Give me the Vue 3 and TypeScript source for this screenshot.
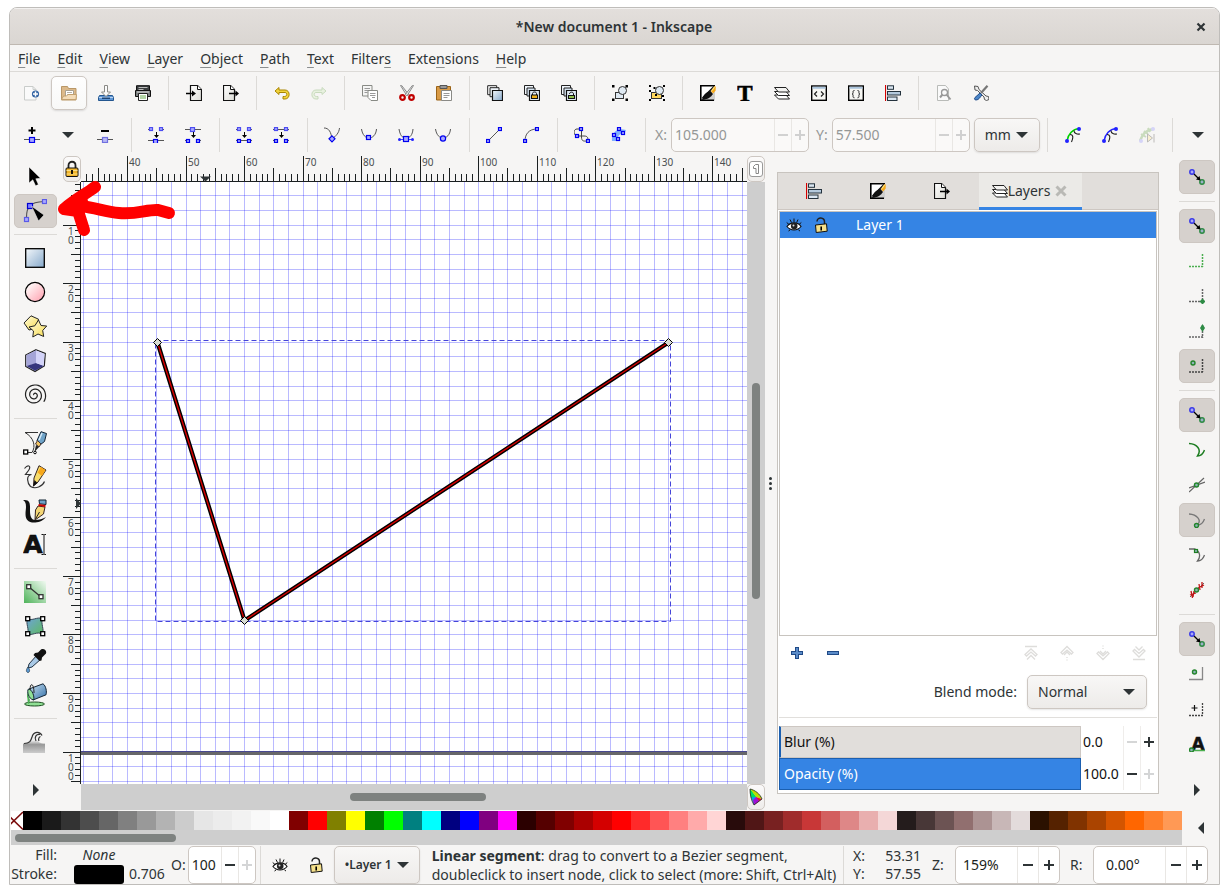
<script setup lang="ts">
import { computed, onBeforeUnmount, onMounted, ref } from 'vue'

type Item = { icon: string; label: string; active?: boolean; hot?: boolean; off?: boolean }

const node = (x: number, y: number, s = 3, stroke = '#0000f0', fill = '#a9a9ff') =>
  `<rect x="${x + 0.5}" y="${y + 0.5}" width="${s}" height="${s}" fill="${fill}" stroke="${stroke}" stroke-width="1.2"/>`
const seg = (d: string, c = '#555', w = 1) =>
  `<path d="${d}" fill="none" stroke="${c}" stroke-width="${w}"/>`
const downArrow = '<path d="M8.500 5v4" stroke="#000" fill="none"/><path d="M6 8h5l-2.500 3z" fill="#000"/>'
const plusBox = '<path d="M8 0v7M4.500 3.500h7" stroke="#000" stroke-width="2"/>'
const page = '<path d="M4.500.5h7l4 4v11h-11z" fill="url(#gPage)" stroke="#111" stroke-width="1.200"/><path d="M11.500.5v4h4" fill="#fff" stroke="#111"/>'
const snapPair =
  '<circle cx="3" cy="3" r="2.200" fill="#a9a9f5" stroke="#3a3ae8" stroke-width="1.500"/><circle cx="13" cy="13" r="2.200" fill="#9cb0c8" stroke="#2e8b45" stroke-width="1.500"/><path d="M5 5l4 4" stroke="#000" stroke-width="1.300"/><path d="M11.500 11.500l-4.500-1 3.500-3.500z" fill="#000"/>'
const greenDot = (x: number, y: number) =>
  `<circle cx="${x}" cy="${y}" r="2" fill="#8fb3b8" stroke="#23852b" stroke-width="1.400"/>`
const drawer = (body: string) =>
  `<path d="M.5.5h9v9h-9z" fill="#eef4fa" stroke="#222"/><path d="M3 3h8v8h-8z" fill="#d5e3f0" stroke="#222"/>${body}`
const fillStroke =
  '<path d="M.7.700h14.300L.7 14z" fill="#fff"/><path d="M15 6v9.500H6z" fill="#cfcfcf"/><path d="M0 .8h15M.8 0v15.500M0 15.200h14" fill="none" stroke="#000" stroke-width="1.600"/><path d="M2 15c1-5 4-8 8.500-9l2.500 3c-2 3-5 5.500-11 6z" fill="#111"/><path d="M2.500 13L14 1.500" stroke="#111" stroke-width="1.500"/><path d="M11 6l3.500-5 1.300.8-.2 4-2.500 2.700z" fill="#f5a81b"/><path d="M12 5.500l2.500-3.500" stroke="#ffe680" stroke-width="1.200"/>'
const align =
  '<path d="M.5 0v16" stroke="#d40000" stroke-width="1.200"/><rect x="2.500" y=".8" width="6" height="3.500" fill="#dbe7f2" stroke="#24323d"/><rect x="2.500" y="6.500" width="13" height="3.500" fill="#b5cadd" stroke="#24323d"/><rect x="2.500" y="12" width="9.500" height="3.500" fill="#dbe7f2" stroke="#24323d"/>'
const layers =
  '<path d="M.5 10l4 4h11l-3.500-4z" fill="#fff" stroke="#222"/><path d="M.5 6.500l4 4h11L12 6.500z" fill="#fff" stroke="#222"/><path d="M.5 2.500l4 4.500h11L12 2.500z" fill="#f3f3f1" stroke="#222"/>'
const exportIcon =
  '<path d="M.5.5h7l4 4v11H.5z" fill="url(#gPage)" stroke="#111" stroke-width="1.200"/><path d="M7.500.5v4h4" fill="#fff" stroke="#111"/><path d="M6 8.500h8" stroke="#000" stroke-width="1.300"/><path d="M12.500 5.500l3.500 3-3.500 3z" fill="#000"/>'
const eye =
  '<path d="M1 9.500c3-4.500 11-5 14 0-3.500 4.500-10.500 4.500-14 0z" fill="#fff" stroke="#111" stroke-width="1.200"/><circle cx="8.200" cy="9" r="3.300" fill="#222"/><circle cx="7.500" cy="8.500" r="1" fill="#ddd"/><path d="M.7 5.500l2.300 2M4 2.500l1.500 3M8 1.500v3.500M12 2.500l-1.300 3M15.300 5.500l-2.300 2M2.500 14l1.500-1M12.500 13l1.500 1" stroke="#111" fill="none"/>'
const lockOpen =
  '<path d="M4 4.500c0-5 8-4.500 7.500.5v2.500" fill="none" stroke="#222" stroke-width="1.500"/><path d="M2.500 8l11-1.200.7 7.400-11 1.300z" fill="#f5e08a" stroke="#111"/><path d="M8.200 9.500v4" stroke="#000" stroke-width="1.600"/>'
const chevron = (d: string) => `<path d="${d}" fill="none" stroke="#dedddb" stroke-width="1.300"/>`
const spiralPoints = Array.from({ length: 90 }, (_, i) => {
  const t = i / 89
  const a = Math.PI * (0.2 - 5.2 * (1 - t))
  const r = 0.6 + 10.9 * t
  return `${(11.5 + r * Math.cos(a)).toFixed(1)},${(12 + r * Math.sin(a)).toFixed(1)}`
}).join(' ')

const icons: Record<string, string> = {
  newDoc: '<path d="M.5 1.500h8.500l3 3v10.500H.5z" fill="#fafafa" stroke="#c9ccca"/><path d="M9 1.500v3h3" fill="none" stroke="#c9ccca"/><circle cx="11.500" cy="9" r="3.600" fill="#3465a4"/><path d="M11.500 6.500v5M9 9h5" stroke="#fff" stroke-width="1.500"/>',
  open: '<path d="M.5 1.500h6l1 2h7.500v11.500H.5z" fill="#dcb98a" stroke="#b99767"/><path d="M4.500 5.500h8v6h-8z" fill="#fff" stroke="#a9a08f"/><path d="M6 7.500h5M6 9.500h5" stroke="#b5b0a5"/><path d="M.5 14.500l2-3.500h3l1.500-1.500h8.500l-.5 5z" fill="#f4dcb8" stroke="#c2a06f"/>',
  save: '<path d="M1.500 10.500h13l1 2v3H.5v-3z" fill="#5f97d6" stroke="#24568f"/><path d="M1 12.500h14" stroke="#bcd4ee"/><path d="M4 12.500h8v1.500H4z" fill="#1d4576"/><path d="M6.500.5h3v6.500h3L8 11.500 3.500 7h3z" fill="#fbfbfb" stroke="#8a8a86"/>',
  print: '<path d="M1.500.7h13v6h-13z" fill="#3b3f40" stroke="#111"/><path d="M3.500 2.500h9M3.500 4.500h5" stroke="#bbb"/><path d="M.5 5.500h15v6H.5z" fill="#7b7f80" stroke="#111"/><path d="M2 7h12" stroke="#ddd"/><path d="M3.500 8.500h9v7h-9z" fill="#fff" stroke="#222"/><path d="M5 11h6M5 13h6" stroke="#9bc78b" stroke-width="1.500"/>',
  importDoc: page + '<path d="M0 8.500h8" stroke="#000" stroke-width="1.300"/><path d="M6 5.500l4 3-4 3z" fill="#000"/>',
  exportDoc: exportIcon,
  undo: '<path d="M5 2.500L1 6l4 3.500V7.500h6c2.500 0 2.500 4-.5 4H9v2.500h2c5.500 0 5.500-9 0-9H5z" fill="#f2d43c" stroke="#a98500"/>',
  redo: '<g opacity=".35"><path d="M11 2.500L15 6l-4 3.500V7.500H5c-2.500 0-2.500 4 .5 4H7v2.500H5c-5.500 0-5.500-9 0-9h6z" fill="#cdeab8" stroke="#73a956"/></g>',
  copy: '<path d="M.5.5h9.500v10.500H.5z" fill="#f5f5f4" stroke="#888a85"/><path d="M2.500 3.500h5.500M2.500 5.500h5.500M2.500 7.500h3" stroke="#999"/><path d="M6 5.500h9.500V15.500H9L6 12.500z" fill="#fff" stroke="#888a85"/><path d="M8 8.500h5.500M8 10.500h5.500M10 12.500h3" stroke="#999"/>',
  cut: '<path d="M1.500.5l1-.2 7 9-1.500 1.500z" fill="#eee" stroke="#888"/><path d="M14.500.5l-1-.2-7 9 1.500 1.500z" fill="#eee" stroke="#888"/><g fill="none" stroke="#c00000" stroke-width="2.200"><circle cx="3.500" cy="12.500" r="2.300"/><circle cx="12.500" cy="12.500" r="2.300"/></g>',
  paste: '<path d="M.5 1.500h14v13.500H.5z" fill="#d99a45" stroke="#9a6317"/><path d="M4 .5h7v3H4z" fill="#999" stroke="#555"/><path d="M5.500 5.500h10V15.500h-10z" fill="#fff" stroke="#8a8a86"/><path d="M7.500 8.500h6M7.500 10.500h6M7.500 12.500h4" stroke="#999"/>',
  duplicate: '<path d="M.7.700h9v9h-9z" fill="#fff" stroke="#222"/><path d="M3 2.700h9v9H3z" fill="#eef4fa" stroke="#222"/><path d="M5.500 5.500h10v10h-10z" fill="url(#gBlue)" stroke="#111" stroke-width="1.200"/>',
  clone: drawer('<path d="M5.500 5.500h10v10h-10z" fill="#dfeaf4" stroke="#111" stroke-width="1.200"/><path d="M8.500 10V8.500c0-2 4-2 4 0V10" fill="none" stroke="#111"/><rect x="7.500" y="10" width="6" height="3.500" fill="#f1b21b" stroke="#111"/>'),
  unlink: drawer('<path d="M5.500 5.500h10v10h-10z" fill="#dfeaf4" stroke="#111" stroke-width="1.200"/><path d="M8.500 9c0-2.500 4-2.500 4 0V10" fill="none" stroke="#111"/><rect x="7.500" y="10.500" width="6" height="3" fill="#8fc04b" stroke="#111"/>'),
  group: '<rect x="3.500" y="7.500" width="8" height="6" fill="#dfe9f2" stroke="#333"/><circle cx="10.500" cy="5.500" r="4" fill="#dfe9f2" stroke="#333"/><path d="M0 0h2.500v2.500H0zM13.500 0H16v2.500h-2.500zM0 13.500h2.500V16H0zM13.500 13.500H16V16h-2.500z"/>',
  ungroup: '<rect x="2.500" y="7.500" width="10" height="6" fill="#ffd75e" stroke="#333"/><circle cx="10.500" cy="5.500" r="4" fill="#dfe9f2" stroke="#333"/><path d="M0 0h2v2H0zM4.500 2h2v2h-2zM14 0h2v2h-2zM0 5h2v2H0zM0 14h2v2H0zM14 14h2v2h-2zM6 9h2v2H6zM13 10h2v2h-2z"/>',
  fillStroke,
  text: '<text x="8" y="15.500" text-anchor="middle" font-family="Liberation Serif, serif" font-weight="700" font-size="23" fill="#000" stroke="#000" stroke-width=".6">T</text>',
  layers,
  xml: '<rect x=".7" y="1" width="14.600" height="14.300" fill="#f7f7f3" stroke="#000" stroke-width="1.400"/><path d="M1.500 2.700h13" stroke="#a9c3dc" stroke-width="2"/><path d="M6 6.500L3.500 9 6 11.500M10 6.500L12.500 9 10 11.500" fill="none" stroke="#222" stroke-width="1.200"/>',
  css: '<rect x=".7" y="1" width="14.600" height="14.300" fill="#f7f7f3" stroke="#000" stroke-width="1.400"/><path d="M1.500 2.700h13" stroke="#a9c3dc" stroke-width="2"/><path d="M6.500 5.500c-3 0 0 3-2.500 3.500 2.500.5-.5 3.800 2.500 3.800M9.500 5.500c3 0 0 3 2.500 3.500-2.500.5.5 3.800-2.500 3.800" fill="none" stroke="#222"/>',
  align,
  docProps: '<path d="M1.500.5h8l3 3.500v11.500h-11z" fill="#fafafa" stroke="#b9bbb8"/><circle cx="8.500" cy="7.500" r="3" fill="none" stroke="#999" stroke-width="1.300"/><path d="M10.500 9.500l4 5M6.500 9.500L4 12.500" stroke="#999" stroke-width="2"/>',
  prefs: '<path d="M1.500 1l3.500.5 1 3 7 6.500 2.500.5.5 3-2.500 1-2-1-.5-2.500L4.500 5.500 2 5z" fill="#eee" stroke="#555"/><path d="M14.500.8L8 8" stroke="#777" stroke-width="2.200"/><path d="M7 8l-5 4.500c-1 1-.5 2.500 1 2.500 3 0 4-3 6-5z" fill="#4b86c8" stroke="#204a87"/>',
  addNode: plusBox + seg('M0 12.500h16') + node(5, 10, 5),
  delNode: '<path d="M4 4h8" stroke="#000" stroke-width="2"/>' + seg('M0 12.500h16') + node(5, 10, 5, '#7070e0', '#b9b9f4'),
  joinNode: seg('M0 2.500h3M13 2.500h3M0 13.500h16') + node(1, 0, 3, '#4c4cf0') + node(11, 0, 3, '#4c4cf0') + downArrow + node(5, 12, 4),
  breakNode: seg('M0 2.500h16M0 13.500h3M13 13.500h3') + node(5, 0, 4, '#4c4cf0') + downArrow + node(1, 12) + node(11, 12),
  joinSeg: seg('M0 2.500h3M13 2.500h3M0 13.500h16') + node(1, 0, 3, '#4c4cf0') + node(11, 0, 3, '#4c4cf0') + downArrow + node(1, 12) + node(11, 12),
  delSeg: seg('M0 2.500h16M0 13.500h3M13 13.500h3') + node(1, 0, 3, '#4c4cf0') + node(11, 0, 3, '#4c4cf0') + downArrow + node(1, 12) + node(11, 12),
  cusp: seg('M0 1c5 0 7 4 8 11 4-3 7-6 7.500-11') + '<path d="M8 8.800l3 3-3 3-3-3z" fill="#a9a9ff" stroke="#0000f0" stroke-width="1.200"/>',
  smooth: seg('M.5 2c1 6 4 9 7.500 9s7-3 7.500-9') + node(5, 8, 4),
  symmetric: seg('M1 2c1 6 3 9 7 9s6.500-3 7-9') + seg('M1 12.500h14', '#44f') + node(5, 9, 5) + '<circle cx="1.500" cy="12.500" r="1.500" fill="#22f"/><circle cx="14.500" cy="12.500" r="1.500" fill="#22f"/>',
  auto: seg('M.5 2c1 6 4 9 7.500 9s7-3 7.500-9') + '<circle cx="8" cy="11.500" r="2.600" fill="#a9a9ff" stroke="#0000f0" stroke-width="1.200"/>',
  toLine: seg('M2 14L14 2') + node(0, 12) + node(12, 0),
  toCurve: seg('M2 14C2 7 6 2 14 2') + node(0, 12) + node(12, 0),
  objPath: seg('M2 9c-3-3-2-7 1-7h4.500v8c0 5 3 4 6 4M3 9h7c4 0 4 2 4 5', '#444') + node(5, 0) + node(1, 7) + node(12, 12),
  strokePath: '<path d="M1 14C0 6 6 0 15 3c-1 2-1 2-1 3-6 0-7 3-8 8z" fill="#7fb0ff"/>' + node(6, 0) + node(10, 4) + node(1, 6) + node(5, 10),
  clipEdit: seg('M2 14C3 7 8 2 14 1.500', '#00d000', 1.6) + seg('M5 7.500c4 0 3 4 1.500 7.500M9 3.500c0 3 3 4 6 3.500', '#222', 1.1) + '<circle cx="2" cy="14" r="2" fill="#22f"/><circle cx="14" cy="2" r="2" fill="#22f"/>',
  maskEdit: seg('M2 14C3 7 8 2 14 1.500', '#2222ff', 1.5) + seg('M5 7.500c4 0 3 4 1.500 7.500M9 3.500c0 3 3 4 6 3.500', '#222', 1.1) + '<circle cx="2" cy="14" r="2" fill="#22f"/><circle cx="14" cy="2" r="2" fill="#22f"/>',
  lpeEdit: '<g opacity=".3">' + seg('M1 14C3 8 7 3 14 2', '#62a040', 2.5) + seg('M2 7l5 3M5 4l4 3M9 1l2 4', '#62a040', 2) + '<circle cx="2" cy="14" r="2" fill="#88f"/><circle cx="14" cy="2" r="2" fill="#88f"/><path d="M8.500 7v8l5-4z" fill="#ffe27a" stroke="#333"/><path d="M15 7v8.500" stroke="#333"/></g>',
  eye,
  lockOpen,
  snap: snapPair,
  bbox: '<path d="M0 13.500h14M13.500 1v13" fill="none" stroke="#4caf50" stroke-width="1.500" stroke-dasharray="2 1"/>',
  bboxEdge: '<path d="M0 13.500h14M13.500 1v13" fill="none" stroke="#666" stroke-width="1.500" stroke-dasharray="2 1"/><path d="M13.500 10.500l3 3-3 3-3-3z" fill="#2e8b45"/>',
  bboxMid: '<path d="M0 14h14M13.500 2v13" fill="none" stroke="#666" stroke-width="1.500" stroke-dasharray="2 1"/><path d="M13.500 1l2.500 4-2.500 4-2.500-4z" fill="#2e8b45"/>',
  bboxCenter: '<path d="M0 14h14M13.500 1v13" fill="none" stroke="#444" stroke-width="1.500" stroke-dasharray="2 1"/>' + greenDot(4, 5),
  snapPath: seg('M0 1.500c8 .5 13 6 8.500 12.500 4 0 6-3 7-6', '#1e7d22', 1.5),
  snapInter: seg('M0 15L15 1M0 11l16-6', '#666', 1.2) + greenDot(7.5, 8),
  snapCusp: seg('M0 2c8 .5 13 6 8.500 11 4 0 6-3 7-6', '#777', 1.3) + greenDot(7.5, 13.5),
  snapSmooth: seg('M0 2h6c5 2 6 8 2.500 12 4 0 6-3 7-6', '#666', 1.3) + node(5, 2, 3, '#1e7d22', '#8fb3b8'),
  snapLine: seg('M1 15L15 1', '#666') + seg('M2 9l1.500 7M5 9l-1 6M10 2l1 6M13 0l0 6M1 13l6-2M9 6l6-3', '#c01818', 1.3) + greenDot(7.5, 8),
  snapCenter: '<path d="M0 13.500h13.500V1" fill="none" stroke="#888" stroke-width="1.300"/>' + greenDot(5.5, 6),
  snapRot: '<path d="M0 14.500h14M13.500 2v12" fill="none" stroke="#444" stroke-width="1.300" stroke-dasharray="2 1"/><path d="M5.500 4v6M2.500 7h6" stroke="#111" stroke-width="1.200"/>',
  snapText: '<text x="9" y="14" text-anchor="middle" font-family="DejaVu Sans, sans-serif" font-weight="700" font-size="17" fill="#111" stroke="#111" stroke-width=".5">A</text><path d="M3 14.500h13" stroke="#4caf50" stroke-width="1.500"/>' + greenDot(2.5, 14),
  raiseTop: chevron('M2 1.500h12M2 9.500l6-5.500 6 5.500-1.500 1.500L8 7l-4.500 4zM4 14.500l4-4 4 4'),
  raise: chevron('M2 7.500L8 1.500l6 6-1.500 1.500L8 5 3.500 9zM5 10l3-3 3 3M8 12v1M8 14.500v1'),
  lower: chevron('M2 8.500l6 6 6-6L12.500 7 8 11 3.500 7zM5 6l3 3 3-3M8 3v1M8 .5v1'),
  lowerBottom: chevron('M2 14.500h12M2 6l6 6 6-6-1.500-1.500L8 8.500l-4.500-4zM4.500 1.500l3.500 3.500 3.500-3.500'),
}

const tools: Record<string, string> = {
  select: '<path d="M6 2v16l3.800-3.200 2.800 6 2.800-1.200-2.600-5.800 4.700-.5z" stroke="#fff" stroke-width=".5"/>',
  nodes: '<path d="M3.500 18C3.500 9 6 3 21 2.500" fill="none" stroke="#555" stroke-width="1.200"/>' + node(4, 4, 5, '#0000d0', '#7f7fff') + node(19, 0, 4, '#5a5ae8') + node(1, 18, 4, '#5a5ae8') + '<path d="M8.500 7l12.500 9-5.500 6z" fill="#000" stroke="#eee" stroke-width=".6"/>',
  rect: '<rect x="2.700" y="1.700" width="18.600" height="18.600" fill="url(#gBlue)" stroke="#000" stroke-width="1.300"/>',
  circle: '<circle cx="12" cy="11" r="9.600" fill="url(#gRed)" stroke="#000" stroke-width="1.200"/>',
  star: '<path d="M8 .8l7.500 3.400-1 8.800-8.500 2L1 8z" fill="url(#gYellow)" stroke="#222"/><path d="M15.500 5l2.500 5.500 5.700.5-4 4.500 1 6-5.700-2.500-5.200 3 .7-6-4.500-4 5.800-1.200z" fill="url(#gYellow)" stroke="#222"/>',
  cube: '<path d="M13 .7l9.300 3.800-1 12.500L12 22.500l-9.300-5V6z" fill="#e8e8ff" stroke="#222" stroke-width="1.200"/><path d="M3.500 6L13 1.500v13L3.500 17z" fill="#a5a5d8"/><path d="M13 14l7.800 3L12 21.800 3.500 17z" fill="#35357d"/><path d="M13 1.500l8.500 3.500-1 11.500L13 14z" fill="#d3d3f8"/>',
  spiral: `<polyline points="${spiralPoints}" fill="none" stroke="#222" stroke-width="1.200"/>`,
  bezier: '<path d="M2 1.500h13M2 1.500c9 5 11 14 7 20H3" fill="none" stroke="#333"/><rect x=".7" y="19" width="4" height="4" fill="#fff" stroke="#000" stroke-width="1.300"/><circle cx="12" cy="21.500" r="1.300" fill="#fff" stroke="#000"/><path d="M18 .7l5.500 1.800-2 8-4 3-3.500-4z" fill="#6fa3c8" stroke="#123"/><path d="M19 2l-3 7" stroke="#d8ebf7" stroke-width="1.500"/><path d="M14.500 9.500l3.500 3.500-2 3-3.500-3z" fill="#f1c566" stroke="#433"/><path d="M13 14l3 2-4.500 5z" fill="#222"/>',
  pencil: '<path d="M1.500 3.500c4-5 7-2 4 2l-3 4h6c-6 1-4 9-1 12 5 3 12 0 14-5" fill="none" stroke="#333" stroke-width="1.200"/><path d="M16 .7l7 4.300-8 12-4.500 4 .5-8z" fill="#f7dc6a" stroke="#322"/><path d="M18 2l4.500 3-3.500 6-4.500-3.500z" fill="#f7a81b"/><path d="M11.500 15l3 3-4.500 3.500z" fill="#111"/>',
  calligraphy: '<path d="M0 1c8-1 7 5 7 11 0 6 2 9 5 9 4 0 8-1 11-3-4 5-10 6-14 5.500C0 22 3 12 3 8c0-4-1-6-3-7z" fill="#111"/><path d="M16 1h7v4.500l-6.500-.7z" fill="#6fa3c8" stroke="#123"/><path d="M15 7l7 1-1.500 7-8.500 6 .5-10z" fill="#f4d675" stroke="#322"/><path d="M15.500 6l7 1" stroke="#c00" stroke-width="1.800"/><path d="M12.500 20l4-7" stroke="#222"/>',
  text: '<text x="10" y="20" text-anchor="middle" font-family="DejaVu Sans, sans-serif" font-weight="700" font-size="25" fill="#111" stroke="#000" stroke-width=".6">A</text><path d="M18.500 1.500h2l.5.5.5-.5h1.500M21 2v19M18.500 21.500h2l.5-.5.5.5h1.500" fill="none" stroke="#111"/>',
  gradient: '<rect x="1" y="0" width="22" height="22" fill="url(#gGreen)"/><path d="M6 6l12 10" stroke="#333" stroke-width="1.300"/><rect x="3.700" y="3.700" width="4" height="4" fill="#fff" stroke="#333" stroke-width="1.300"/><rect x="16" y="13.700" width="4" height="4" fill="#fff" stroke="#333" stroke-width="1.300"/>',
  mesh: '<path d="M4.500 3.500c5 3 9-2 15 0-2 5 2 11 0 15.500-6-3-10 2-15 0 2-5-2-10 0-15.500z" fill="url(#gMesh)" stroke="#345"/><g fill="#fff" stroke="#000" stroke-width="1.300"><rect x="2.700" y="1.700" width="4" height="4"/><rect x="17.700" y="1.700" width="4" height="4"/><rect x="2.700" y="16.700" width="4" height="4"/><rect x="17.700" y="16.700" width="4" height="4"/></g>',
  dropper: '<path d="M14 6l4 4-9 8-4 1 1-4z" fill="#a9c9e6" stroke="#234"/><path d="M12 4l3-.5 3-3c3-1.500 6 1 5 4l-4 4-.5 3-2 .5-6-6z" fill="#111"/><path d="M5 18c3 4 1 5.500 0 5.500s-3-1.500 0-5.500z" fill="#5b9bd5" stroke="#234" stroke-width=".7"/>',
  bucket: '<ellipse cx="11.500" cy="21" rx="10" ry="2" fill="#8fdf94" stroke="#1f4d22"/><path d="M4 9l3 8-1 4c-2 0-1-6-2-7z" fill="#4cae55"/><path d="M6 6L20 .8c3 2 4 8 3 11L10 17z" fill="url(#gBucket)" stroke="#123"/><path d="M5.500 6c-2 2 0 10 5 11C12 14 9 6 5.500 6z" fill="#8fdf94" stroke="#123"/><path d="M7 7c0-8 4-7 4 3" fill="none" stroke="#222"/>',
  tweak: '<path d="M0 12.500c6 0 7-3 8-6.500C10-.5 17-.5 19 5c-3-1.500-5-.5-5 2.500s3 5 8 5V22H0z" fill="url(#gGrey)"/><path d="M1 12.500c6 0 7-3 8-6.500C10.500 0 17 0 19 4.500M13 10c-2-4 0-7 4-6.500M16 10c-1-2 0-4 1.500-4.500" fill="none" stroke="#333" stroke-width="1.200"/>',
}

const menus: [string, string, string][] = [
  ['', 'F', 'ile'], ['', 'E', 'dit'], ['', 'V', 'iew'], ['', 'L', 'ayer'], ['', 'O', 'bject'],
  ['', 'P', 'ath'], ['', 'T', 'ext'], ['Filter', 's', ''], ['Exte', 'n', 'sions'], ['', 'H', 'elp'],
]

const commands: Item[][] = [
  [{ icon: 'newDoc', label: 'New' }, { icon: 'open', label: 'Open', hot: true }, { icon: 'save', label: 'Save' }, { icon: 'print', label: 'Print' }],
  [{ icon: 'importDoc', label: 'Import' }, { icon: 'exportDoc', label: 'Export' }],
  [{ icon: 'undo', label: 'Undo' }, { icon: 'redo', label: 'Redo', off: true }],
  [{ icon: 'copy', label: 'Copy' }, { icon: 'cut', label: 'Cut' }, { icon: 'paste', label: 'Paste' }],
  [{ icon: 'duplicate', label: 'Duplicate' }, { icon: 'clone', label: 'Create clone' }, { icon: 'unlink', label: 'Unlink clone' }],
  [{ icon: 'group', label: 'Group' }, { icon: 'ungroup', label: 'Ungroup' }],
  [{ icon: 'fillStroke', label: 'Fill and stroke' }, { icon: 'text', label: 'Text and font' }, { icon: 'layers', label: 'Layers' }, { icon: 'xml', label: 'XML editor' }, { icon: 'css', label: 'Selectors and CSS' }, { icon: 'align', label: 'Align and distribute' }],
  [{ icon: 'docProps', label: 'Document properties' }, { icon: 'prefs', label: 'Preferences' }],
]

const nodeTools: Item[][] = [
  [{ icon: 'joinNode', label: 'Join nodes' }, { icon: 'breakNode', label: 'Break path' }],
  [{ icon: 'joinSeg', label: 'Join with segment' }, { icon: 'delSeg', label: 'Delete segment' }],
  [{ icon: 'cusp', label: 'Cusp' }, { icon: 'smooth', label: 'Smooth' }, { icon: 'symmetric', label: 'Symmetric' }, { icon: 'auto', label: 'Auto-smooth' }],
  [{ icon: 'toLine', label: 'To line' }, { icon: 'toCurve', label: 'To curve' }],
  [{ icon: 'objPath', label: 'Object to path' }, { icon: 'strokePath', label: 'Stroke to path' }],
]
const pathEdits: Item[] = [
  { icon: 'clipEdit', label: 'Edit clipping path' }, { icon: 'maskEdit', label: 'Edit mask' }, { icon: 'lpeEdit', label: 'Edit path effect', off: true },
]

const toolGroups: Item[][] = [
  [{ icon: 'select', label: 'Selector' }, { icon: 'nodes', label: 'Node tool', active: true }],
  [{ icon: 'rect', label: 'Rectangle' }, { icon: 'circle', label: 'Ellipse' }, { icon: 'star', label: 'Star' }, { icon: 'cube', label: '3D box' }, { icon: 'spiral', label: 'Spiral' }],
  [{ icon: 'bezier', label: 'Bezier' }, { icon: 'pencil', label: 'Pencil' }, { icon: 'calligraphy', label: 'Calligraphy' }, { icon: 'text', label: 'Text' }],
  [{ icon: 'gradient', label: 'Gradient' }, { icon: 'mesh', label: 'Mesh' }, { icon: 'dropper', label: 'Dropper' }, { icon: 'bucket', label: 'Paint bucket' }],
  [{ icon: 'tweak', label: 'Tweak' }],
]

const snapGroups: Item[][] = [
  [{ icon: 'snap', label: 'Enable snapping', active: true }],
  [{ icon: 'snap', label: 'Snap bounding boxes', active: true }, { icon: 'bbox', label: 'Bounding box edges' }, { icon: 'bboxEdge', label: 'Bounding box corners' }, { icon: 'bboxMid', label: 'Edge midpoints' }, { icon: 'bboxCenter', label: 'Box centers', active: true }],
  [{ icon: 'snap', label: 'Snap nodes', active: true }, { icon: 'snapPath', label: 'Snap to paths' }, { icon: 'snapInter', label: 'Path intersections' }, { icon: 'snapCusp', label: 'Cusp nodes', active: true }, { icon: 'snapSmooth', label: 'Smooth nodes' }, { icon: 'snapLine', label: 'Line midpoints' }],
  [{ icon: 'snap', label: 'Snap other points', active: true }, { icon: 'snapCenter', label: 'Object centers' }, { icon: 'snapRot', label: 'Rotation centers' }, { icon: 'snapText', label: 'Text baselines' }],
]

const docks: Item[] = [
  { icon: 'align', label: 'Align and distribute' }, { icon: 'fillStroke', label: 'Fill and stroke' }, { icon: 'exportDoc', label: 'Export' },
]
const orders: Item[] = [
  { icon: 'raiseTop', label: 'Raise to top' }, { icon: 'raise', label: 'Raise' }, { icon: 'lower', label: 'Lower' }, { icon: 'lowerBottom', label: 'Lower to bottom' },
]

const palette = (
  '000000 1a1a1a 333333 4d4d4d 666666 808080 999999 b3b3b3 cccccc e6e6e6 ececec f2f2f2 f9f9f9 ffffff ' +
  '800000 ff0000 808000 ffff00 008000 00ff00 008080 00ffff 000080 0000ff 800080 ff00ff ' +
  '2b0000 550000 800000 aa0000 d40000 ff0000 ff2a2a ff5555 ff8080 ffaaaa ffd5d5 ' +
  '280b0b 501616 782121 a02c2c c83737 d35f5f de8787 e9afaf f4d7d7 ' +
  '241c1c 483737 6c5353 916f6f ac9393 c8b7b7 e3dbdb ' +
  '2b1100 552200 803300 aa4400 d45500 ff6600 ff7f2a ff9955'
).split(' ').map((c) => '#' + c)

/* Pixels per millimetre at 159% zoom, and where 0 mm falls in each ruler. */
const scale = 5.854
const originX = -187.7
const originY = -15.4

const canvas = ref<HTMLElement | null>(null)
const width = ref(0)
const height = ref(0)
const measure = () => {
  width.value = canvas.value?.clientWidth ?? 0
  height.value = canvas.value?.clientHeight ?? 0
}
onMounted(() => {
  measure()
  window.addEventListener('resize', measure)
})
onBeforeUnmount(() => window.removeEventListener('resize', measure))

const marks = (origin: number, step: number, length: number) => {
  const list: { n: number; p: number }[] = []
  for (let n = 0; origin + n * step < length; n++) {
    const p = Math.floor(origin + n * step)
    if (p >= 0) list.push({ n, p })
  }
  return list
}
const ticksX = computed(() => marks(originX, scale, width.value))
const ticksY = computed(() => marks(originY, scale, height.value))
const gridX = computed(() => marks(originX, 2.5 * scale, width.value))
const gridY = computed(() => marks(originY, 2.5 * scale, height.value))
const reach = (n: number, major: number, mid: number, minor: number) => (n % 10 === 0 ? major : n % 5 === 0 ? mid : minor)

const posX = ref('105.000')
const posY = ref('57.500')
const unit = ref('mm')
const blend = ref('Normal')
const blur = ref(0)
const opacity = ref(100)
</script>

<template>
  <svg class="defs" aria-hidden="true">
    <defs>
      <linearGradient id="gBlue" x1="0" y1="0" x2="1" y2="1"><stop offset="0" stop-color="#f4f8fb" /><stop offset="1" stop-color="#86a9cb" /></linearGradient>
      <linearGradient id="gRed" x1="0" y1="0" x2="1" y2="1"><stop offset=".2" stop-color="#fff4f4" /><stop offset="1" stop-color="#ff9cac" /></linearGradient>
      <linearGradient id="gYellow" x1="0" y1="0" x2="1" y2="1"><stop offset="0" stop-color="#fffbe0" /><stop offset="1" stop-color="#f7dc4e" /></linearGradient>
      <linearGradient id="gGreen" x1="0" y1="1" x2="1" y2="0"><stop offset="0" stop-color="#4fb35a" /><stop offset="1" stop-color="#f2faf2" /></linearGradient>
      <linearGradient id="gMesh" x1="0" y1="0" x2="1" y2="1"><stop offset="0" stop-color="#6fa3d8" /><stop offset="1" stop-color="#5dba5f" /></linearGradient>
      <linearGradient id="gBucket" x1="0" y1="0" x2="1" y2="1"><stop offset="0" stop-color="#d3e6f3" /><stop offset="1" stop-color="#2f6ea8" /></linearGradient>
      <linearGradient id="gGrey" x1="0" y1="0" x2="0" y2="1"><stop offset=".4" stop-color="#eee" /><stop offset=".6" stop-color="#999" /><stop offset="1" stop-color="#ccc" /></linearGradient>
      <linearGradient id="gPage" x1="0" y1="0" x2="1" y2="1"><stop offset="0" stop-color="#fff" /><stop offset="1" stop-color="#dcdcd6" /></linearGradient>
    </defs>
  </svg>
  <div class="desk">
    <div class="window">
      <header class="titlebar">
        <h1>*New document 1 - Inkscape</h1>
        <button class="close" aria-label="Close"><svg width="10" height="10" viewBox="0 0 10 10"><path d="M1.500 1.500l7 7M8.500 1.500l-7 7" stroke="#2e3436" stroke-width="2.200" /></svg></button>
      </header>

      <nav class="menubar">
        <button v-for="m in menus" :key="m.join('')">{{ m[0] }}<u>{{ m[1] }}</u>{{ m[2] }}</button>
      </nav>

      <div class="toolbar">
        <template v-for="(g, i) in commands" :key="i">
          <span v-if="i" class="vsep"></span>
          <button v-for="c in g" :key="c.label" class="tb" :class="{ hot: c.hot }" :disabled="c.off" :aria-label="c.label">
            <svg width="16" height="16" viewBox="0 0 16 16" v-html="icons[c.icon]"></svg>
          </button>
        </template>
      </div>

      <div class="toolbar nodebar">
        <button class="tb late" aria-label="Insert node"><svg width="16" height="16" viewBox="0 0 16 16" v-html="icons.addNode"></svg></button>
        <button class="tb" aria-label="Insert node options"><svg width="16" height="16" viewBox="0 0 16 16"><path d="M2 5h12l-6 6z" fill="#2e3436" /></svg></button>
        <button class="tb" aria-label="Delete node"><svg width="16" height="16" viewBox="0 0 16 16" v-html="icons.delNode"></svg></button>
        <template v-for="(g, i) in nodeTools" :key="i">
          <span class="vsep"></span>
          <button v-for="c in g" :key="c.label" class="tb" :aria-label="c.label">
            <svg width="16" height="16" viewBox="0 0 16 16" v-html="icons[c.icon]"></svg>
          </button>
        </template>
        <span class="vsep"></span>
        <label class="dim" for="posx">X:</label>
        <span class="spin coord">
          <input id="posx" v-model="posX" type="text" disabled />
          <button disabled aria-label="Decrease X"><i class="minus"></i></button>
          <button disabled aria-label="Increase X"><i class="plus"></i></button>
        </span>
        <label class="dim" for="posy">Y:</label>
        <span class="spin coord">
          <input id="posy" v-model="posY" type="text" disabled />
          <button disabled aria-label="Decrease Y"><i class="minus"></i></button>
          <button disabled aria-label="Increase Y"><i class="plus"></i></button>
        </span>
        <span class="combo unit">
          <select v-model="unit" aria-label="Units"><option>mm</option><option>px</option></select>
          <i class="caret"></i>
        </span>
        <span class="vsep"></span>
        <button v-for="c in pathEdits" :key="c.label" class="tb late" :disabled="c.off" :aria-label="c.label">
          <svg width="16" height="16" viewBox="0 0 16 16" v-html="icons[c.icon]"></svg>
        </button>
        <span class="vsep"></span>
        <button class="tb late" aria-label="More"><svg width="16" height="16" viewBox="0 0 16 16"><path d="M2 5h12l-6 6z" fill="#2e3436" /></svg></button>
      </div>

      <main class="body">
        <aside class="toolbox">
          <template v-for="(g, i) in toolGroups" :key="i">
            <span v-if="i" class="hsep"></span>
            <button v-for="t in g" :key="t.label" :class="{ active: t.active }" :aria-label="t.label">
              <svg width="24" height="24" viewBox="0 0 24 24" v-html="tools[t.icon]"></svg>
            </button>
          </template>
          <button class="more" aria-label="More tools"><svg width="8" height="12" viewBox="0 0 8 12"><path d="M1 0l6 6-6 6z" fill="#2e3436" /></svg></button>
        </aside>

        <section class="editor">
          <button class="corner" aria-label="Lock guides">
            <svg width="14" height="18" viewBox="0 0 14 18"><path d="M3.500 8V5.500c0-5 7-5 7 0V8" fill="none" stroke="#222" stroke-width="1.800" /><rect x="1" y="8" width="12" height="8.500" rx="1" fill="#f0b429" stroke="#111" /><path d="M1.500 10.500h11M1.500 14h11" stroke="#fbe08a" /><path d="M7 10v4" stroke="#000" stroke-width="1.800" /></svg>
          </button>
          <svg class="ruler-x" width="100%" height="26">
            <g fill="#1b2022">
              <rect v-for="t in ticksX" :key="t.n" :x="t.p" :y="reach(t.n, 0, 12, 18)" width="1" height="26" />
              <rect x="0" y="25" width="100%" height="1" />
              <path d="M119 20.500h11l-5.500 5z" fill="#2e3436" />
            </g>
            <template v-for="t in ticksX" :key="t.n">
              <text v-if="t.n % 10 === 0" :x="t.p + 2" y="10">{{ t.n }}</text>
            </template>
          </svg>
          <button class="corner" aria-label="Toggle quick zoom"><span><svg width="8" height="10" viewBox="0 0 8 10"><path d="M1.500 2.500l2-2h3v9H4V4.500H1.500z" fill="#fff" stroke="#888" /></svg></span></button>

          <svg class="ruler-y" width="18" height="100%">
            <g fill="#1b2022">
              <rect v-for="t in ticksY" :key="t.n" :x="reach(t.n, 0, 8, 12)" :y="t.p" width="18" height="1" />
              <rect x="17" y="0" width="1" height="100%" />
              <path d="M13 316v11l5-5.500z" fill="#2e3436" />
            </g>
            <template v-for="t in ticksY" :key="t.n">
              <template v-if="t.n % 10 === 0 && t.n > 0">
                <text v-for="(d, k) in String(t.n)" :key="k" x="5" :y="t.p + 10 + k * 9">{{ d }}</text>
              </template>
            </template>
          </svg>
          <div ref="canvas" class="canvas">
            <svg width="100%" height="100%">
              <g fill="#0000ff" fill-opacity=".27">
                <rect v-for="x in gridX" :key="x.n" :x="x.p" y="0" width="1" height="100%" />
                <rect v-for="y in gridY" :key="y.n" x="0" :y="y.p" width="100%" height="1" />
              </g>
              <rect x="0" y="569" width="100%" height="1" fill="#484890" />
              <rect x="0" y="570" width="100%" height="3" fill="#666669" />
              <rect x="74.500" y="158.500" width="515" height="281" fill="none" stroke="#4545d8" stroke-dasharray="5 3" />
              <path d="M76.500 160.500L163.500 438.500L587.500 160.500" fill="none" stroke="#000" stroke-width="4.200" />
              <path d="M76.500 160.500L163.500 438.500L587.500 160.500" fill="none" stroke="#d80000" stroke-width="1.400" />
              <g fill="#d8dcd4" stroke="#000">
                <path d="M76.500 156.500l4 4-4 4-4-4zM163.500 434.500l4 4-4 4-4-4zM587.500 156.500l4 4-4 4-4-4z" />
              </g>
            </svg>
          </div>
          <div class="vscroll"><i></i></div>
          <div class="hscroll"><i></i></div>
          <button class="corner" aria-label="Color management">
            <svg width="14" height="18" viewBox="0 0 14 18"><path d="M1 1l6 8-5 1z" fill="#00e000" /><path d="M1 1c5 1 10 5 12 10L7 9z" fill="#b8e000" /><path d="M13 11L5 17 7 9z" fill="#f0102a" /><path d="M2 9l5 0-2 8z" fill="#00a8e8" /><path d="M1 1c0 3 .5 6 1 8l5 0z" fill="#00e060" /><path d="M5 17l5-4-3-4-3 3z" fill="#a010d8" /><path d="M1 1c5 1 10 5 12 10L5 17C2 12 1 6 1 1z" fill="none" stroke="#222" stroke-width=".8" /></svg>
          </button>
        </section>

        <div class="splitter"><i></i><i></i><i></i></div>

        <section class="dock">
          <div class="tabs" role="tablist">
            <button v-for="d in docks" :key="d.label" class="tab" role="tab" :aria-label="d.label"><svg width="16" height="16" viewBox="0 0 16 16" v-html="icons[d.icon]"></svg></button>
            <div class="tab current">
              <svg width="16" height="16" viewBox="0 0 16 16" v-html="icons.layers"></svg>
              <button role="tab" aria-selected="true">Layers</button>
              <button aria-label="Close Layers"><svg width="12" height="12" viewBox="0 0 12 12"><path d="M1.500 1.500l9 9M10.500 1.500l-9 9" stroke="#b9b9b5" stroke-width="3" /></svg></button>
            </div>
          </div>
          <div class="tree">
            <div class="layer-row">
              <button aria-label="Hide layer"><svg width="16" height="16" viewBox="0 0 16 16" v-html="icons.eye"></svg></button>
              <button aria-label="Lock layer"><svg width="16" height="16" viewBox="0 0 16 16" v-html="icons.lockOpen"></svg></button>
              <span>Layer 1</span>
            </div>
          </div>
          <div class="layer-actions">
            <button aria-label="Add layer"><svg width="12" height="12" viewBox="0 0 12 12"><path d="M6 0v12M0 6h12" stroke="#204a87" stroke-width="4" /><path d="M6 1v10M1 6h10" stroke="#5b8cc9" stroke-width="2" /></svg></button>
            <button aria-label="Remove layer"><svg width="12" height="12" viewBox="0 0 12 12"><path d="M0 6h12" stroke="#204a87" stroke-width="4" /><path d="M1 6h10" stroke="#5b8cc9" stroke-width="2" /></svg></button>
            <span class="grow"></span>
            <button v-for="o in orders" :key="o.label" disabled :aria-label="o.label"><svg width="16" height="16" viewBox="0 0 16 16" v-html="icons[o.icon]"></svg></button>
          </div>
          <div class="blend">
            <label for="blend">Blend mode:</label>
            <span class="combo">
              <select id="blend" v-model="blend"><option>Normal</option><option>Multiply</option><option>Screen</option></select>
              <i class="caret"></i>
            </span>
          </div>
          <div class="scales">
            <div class="scale">
              <span class="bar"><input id="blur" v-model.number="blur" type="range" min="0" max="100" /><label for="blur">Blur (%)</label></span>
              <output for="blur">{{ blur.toFixed(1) }}</output>
              <button disabled aria-label="Decrease blur"><i class="minus"></i></button>
              <button aria-label="Increase blur"><i class="plus"></i></button>
            </div>
            <div class="scale full">
              <span class="bar"><input id="opacity" v-model.number="opacity" type="range" min="0" max="100" /><label for="opacity">Opacity (%)</label></span>
              <output for="opacity">{{ opacity.toFixed(1) }}</output>
              <button aria-label="Decrease opacity"><i class="minus"></i></button>
              <button disabled aria-label="Increase opacity"><i class="plus"></i></button>
            </div>
          </div>
        </section>

        <aside class="snapbar">
          <template v-for="(g, i) in snapGroups" :key="i">
            <span v-if="i" class="hsep"></span>
            <button v-for="s in g" :key="s.label" :class="{ active: s.active }" :aria-label="s.label">
              <svg width="16" height="16" viewBox="0 0 16 16" v-html="icons[s.icon]"></svg>
            </button>
          </template>
          <button class="more" aria-label="More snapping"><svg width="8" height="12" viewBox="0 0 8 12"><path d="M1 0l6 6-6 6z" fill="#2e3436" /></svg></button>
        </aside>

        <svg class="marker" width="180" height="90" viewBox="10 156 180 90" aria-hidden="true">
          <path d="M95 187C84 195 76 199 64 209L78 211L84 230M64 209C84 202 98 211 119 213C136 215 148 209 158 210L169 213" fill="none" stroke="#f00" stroke-width="12" stroke-linecap="round" stroke-linejoin="round" />
          <path d="M62 207L86 194L90 208L78 218z" fill="#f00" />
        </svg>
      </main>

      <div class="palette">
        <div class="swatches">
          <button class="none" aria-label="No color"><svg width="12" height="19" viewBox="0 0 12 19"><path d="M-6 1L12 18.500M-6 18.500L12 1" stroke="#7a0c0c" stroke-width="1.500" /></svg></button>
          <button v-for="(c, i) in palette" :key="i" :style="{ background: c }" :aria-label="c"></button>
        </div>
        <div class="pal-scroll"><i></i></div>
        <button class="pal-menu" aria-label="Palette menu"><svg width="8" height="12" viewBox="0 0 8 12"><path d="M7 0L1 6l6 6z" fill="#2e3436" /></svg></button>
      </div>

      <footer class="status">
        <div class="style-box">
          <span class="r">Fill:</span><em>None</em><span></span>
          <span class="r">Stroke:</span><button aria-label="Stroke color"></button><span>0.706</span>
        </div>
        <label class="opa" for="opa">O:</label>
        <span class="spin opa-spin">
          <input id="opa" type="text" value="100" />
          <button aria-label="Decrease"><i class="minus"></i></button>
          <button disabled aria-label="Increase"><i class="plus"></i></button>
        </span>
        <span class="line"></span>
        <button class="flat" aria-label="Layer visibility"><svg width="16" height="16" viewBox="0 0 16 16" v-html="icons.eye"></svg></button>
        <button class="flat" aria-label="Layer lock"><svg width="16" height="16" viewBox="0 0 16 16" v-html="icons.lockOpen"></svg></button>
        <span class="combo layer">
          <select aria-label="Current layer"><option>•Layer 1</option></select>
          <i class="caret"></i>
        </span>
        <p class="message"><b>Linear segment</b>: drag to convert to a Bezier segment,<br />doubleclick to insert node, click to select (more: Shift, Ctrl+Alt)</p>
        <span class="line"></span>
        <div class="coords"><span>X:</span><span>53.31</span><span>Y:</span><span>57.55</span></div>
        <label class="zl" for="zoom">Z:</label>
        <span class="spin zoom">
          <input id="zoom" type="text" value="159%" />
          <button aria-label="Zoom out"><i class="minus"></i></button>
          <button aria-label="Zoom in"><i class="plus"></i></button>
        </span>
        <label class="rl" for="rot">R:</label>
        <span class="spin rot">
          <input id="rot" type="text" value="0.00°" />
          <button aria-label="Rotate left"><i class="minus"></i></button>
          <button aria-label="Rotate right"><i class="plus"></i></button>
        </span>
      </footer>
    </div>
  </div>
</template>

<style>
body { background: #fff; }
</style>

<style scoped>
* { box-sizing: border-box; }
.defs { position: absolute; width: 0; height: 0; }
.desk { min-height: 100vh; display: flex; padding: 7px 9px 9px; font: 14px/18px "Noto Sans", "Open Sans", sans-serif; color: #2e3436; }
.window { flex: 1; min-width: 0; display: flex; flex-direction: column; border: 1px solid #bfbdba; border-radius: 8px 8px 0 0; background: #f6f5f4; overflow: hidden; }
button { border: 0; padding: 0; margin: 0; background: none; font: inherit; color: inherit; }
svg { display: block; flex: none; }
.grow { flex: 1; }

.titlebar { display: flex; align-items: center; height: 37px; padding: 1px 7px 0 28px; background: linear-gradient(#e3dfdc, #dad6d2); border-bottom: 1px solid #bfb8b1; box-shadow: inset 0 1px #f3f1f0; }
.titlebar h1 { flex: 1; margin: 0; font-size: 14px; font-weight: 600; text-align: center; }
.close { width: 22px; height: 22px; display: grid; place-items: center; }

.menubar { display: flex; height: 27px; border-bottom: 1px solid #dcdad7; }
.menubar button { padding: 0 8px; margin-right: 1px; line-height: 28px; }
.menubar u { text-underline-offset: 3px; text-decoration-color: #8b8e8f; text-decoration-thickness: 1px; text-decoration-skip-ink: none; }

.toolbar { display: flex; align-items: center; height: 42px; padding: 0 4px; }
.tb { flex: none; width: 37px; height: 34px; padding: 0 11px 0 10px; border-radius: 5px; }
.nodebar .tb { padding: 0 12px 0 9px; }
.nodebar .late { padding: 0 11px 0 10px; }
.tb.hot { width: 36px; margin-right: 1px; padding: 0 8px 0 9px; border: 1px solid #cdc7c2; background: linear-gradient(#fefefe, #f8f8f7); box-shadow: 0 1px 2px rgba(0, 0, 0, .12); }
.vsep { flex: none; width: 1px; height: 34px; margin: 0 7px 0 6px; background: #dcdad7; }
.dim { margin: 0 4px 0 2px; color: #949796; }

.spin { flex: none; display: flex; border: 1px solid #cdc7c2; border-radius: 5px; background: #fff; overflow: hidden; }
.spin input { flex: 1; min-width: 0; border: 0; padding: 0 0 0 3px; background: none; font: inherit; color: #1a1e20; }
.spin button { width: 17px; border-left: 1px solid #e9e7e4; display: grid; place-items: center; }
.coord { width: 138px; height: 34px; background: #faf9f8; }
.coord + .dim { margin-left: 7px; }
.coord input, .coord input:disabled { color: #949796; }
.minus, .plus { position: relative; display: block; width: 10px; height: 10px; background: linear-gradient(#2e3436, #2e3436) center / 10px 2px no-repeat; }
.plus { background: linear-gradient(#2e3436, #2e3436) center / 10px 2px no-repeat, linear-gradient(#2e3436, #2e3436) center / 2px 10px no-repeat; }
button:disabled .minus, button:disabled .plus { opacity: .2; }
.combo { position: relative; flex: none; display: block; }
.combo select { display: block; width: 100%; height: 34px; padding: 0 10px; border: 1px solid #cdc7c2; border-radius: 5px; background: linear-gradient(#f8f7f6, #edebe9); box-shadow: 0 1px 2px rgba(0, 0, 0, .1); appearance: none; font: inherit; color: #2e3436; }
.caret { position: absolute; right: 12px; top: 14px; border: 6px solid transparent; border-top-color: #2e3436; border-bottom: 0; pointer-events: none; }
.unit { width: 66px; margin: 0 1px 0 4px; }

.body { position: relative; flex: 1; display: flex; padding-bottom: 1px; }
.toolbox { width: 53px; padding: 4px 6px 0 4px; display: flex; flex-direction: column; }
.toolbox button { height: 34px; padding: 0 8px; border: 1px solid transparent; border-radius: 5px; }
.toolbox button svg { margin: 0 auto 0 0; }
.hsep { flex: none; height: 1px; margin: 6px 0 7px; background: #dcdad7; }
.toolbox .active, .snapbar .active { background: #d6d1cd; border-color: #cdc7c2; }
.toolbox .more { margin-top: 13px; }
.toolbox .more svg { margin: 0 auto; }

.editor { flex: 1; min-width: 0; display: grid; grid-template: 26px 1fr 26px / 18px 1fr 18px; }
.editor .ruler-x, .editor .ruler-y { overflow: hidden; font-size: 10px; }
.ruler-x text, .ruler-y text { fill: #4a4f51; }
.corner { display: grid; place-items: center; border: 1px solid #cdc7c2; border-radius: 5px; background: linear-gradient(#fbfafa, #eeecea); }
.corner span { display: grid; place-items: center; width: 14px; height: 16px; border: 1px solid #999; border-radius: 3px; background: #fff; }
.canvas { position: relative; background: #fff; overflow: hidden; }
.canvas svg { position: absolute; inset: 0; }
.vscroll, .hscroll { background: #cecece; display: flex; justify-content: center; }
.vscroll { padding-top: 201px; }
.vscroll i { width: 8px; height: 216px; border-radius: 4px; background: #7e8280; }
.hscroll { grid-column: 2; align-items: center; justify-content: flex-start; padding-left: 269px; }
.hscroll i { width: 136px; height: 8px; border-radius: 4px; background: #7e8280; }

.splitter { width: 12px; padding-right: 1px; display: flex; flex-direction: column; align-items: center; justify-content: center; gap: 2px; }
.splitter i { width: 3px; height: 3px; border-radius: 2px; background: #2e3436; }

.dock { width: 382px; margin: 16px 0; display: flex; flex-direction: column; border: 1px solid #c8c4bf; background: #fff; }
.tabs { display: flex; height: 37px; padding-left: 4px; background: #e1dedb; border-bottom: 1px solid #cdc7c2; }
.tab { width: 64px; padding-bottom: 1px; display: flex; align-items: center; justify-content: center; }
.tab.current { width: 103px; height: 37px; margin-left: 5px; padding: 0 2px 2px 0; background: #ebeae7; box-shadow: inset 0 -3px #3584e4; }
.tab.current button + button { margin-left: 5px; }
.tree { flex: 1; margin: 1px 1px 0; border: 1px solid #c8c4bf; background: #fff; }
.layer-row { height: 26px; display: flex; align-items: center; padding-left: 6px; background: #3584e4; color: #fff; }
.layer-row button { margin-right: 11px; }
.layer-row span { margin-left: 16px; }
.layer-actions { display: flex; align-items: center; height: 34px; padding: 0 1px; }
.layer-actions button { width: 36px; height: 34px; display: grid; place-items: center; }
.blend { display: flex; align-items: center; justify-content: flex-end; gap: 10px; margin: 5px 1px 0; padding: 0 10px 8px; border-bottom: 1px solid #e1dfdc; }
.blend .combo { width: 120px; }
.scales { padding: 8px 1px 3px; }
.scale { display: flex; height: 32px; color: #111; }
.bar { position: relative; flex: 1; display: block; border: 1px solid #cdc7c2; border-left: 2px solid #1b5fb0; background: #e1dedb; }
.bar input { position: absolute; inset: 0; width: 100%; height: 100%; margin: 0; opacity: 0; }
.bar label { line-height: 30px; margin-left: 3px; pointer-events: none; }
.full .bar { background: #3584e4; border: 1px solid #1b5fb0; color: #fff; }
.full .bar label { margin-left: 4px; }
.scale output { width: 42px; padding-left: 2px; line-height: 32px; }
.scale button { width: 17px; display: grid; place-items: center; border-left: 1px solid #efedeb; }

.snapbar { width: 60px; padding: 4px 4px 0 20px; display: flex; flex-direction: column; }
.snapbar button { height: 34px; margin-bottom: 1px; display: grid; place-items: center; border: 1px solid transparent; border-radius: 5px; }
.snapbar .more { margin-top: 11px; }
.marker { position: absolute; left: 0; top: 0; pointer-events: none; }

.palette { display: grid; grid-template: 19px 15px / 1fr 37px; padding-left: 1px; }
.swatches { display: flex; }
.swatches button { flex: 1; min-width: 0; height: 19px; }
.swatches .none { flex: none; width: 12px; background: #fff; overflow: hidden; }
.pal-scroll { grid-row: 2; background: #cecece; padding: 4px 4px 0; }
.pal-scroll i { display: block; width: 161px; height: 8px; border-radius: 4px; background: #7e8280; }
.pal-menu { grid-column: 2; grid-row: 1 / 3; display: grid; place-items: center; }

.status { display: flex; align-items: center; height: 39px; }
.style-box { flex: none; display: grid; grid-template: 19px 19px / 47px 72px 42px; align-items: center; }
.style-box .r { text-align: right; }
.style-box em { text-align: center; padding-left: 12px; }
.style-box button { height: 19px; margin: 0 5px 0 17px; border-radius: 3px; background: #000; }
.opa { margin-right: 2px; }
.opa-spin { width: 68px; height: 38px; }
.opa-spin input { padding-left: 3px; }
.line { flex: none; width: 1px; height: 38px; background: #dcdad7; margin-left: 4px; }
.flat { width: 36px; height: 34px; padding: 0 9px 0 11px; }
.layer { width: 86px; margin-left: 1px; }
.layer select { height: 38px; padding: 0 10px; font-size: 12px; font-weight: 600; }
.layer .caret { top: 16px; right: 11px; }
.message { flex: 1; min-width: 0; margin: 0 0 0 12px; line-height: 19px; white-space: nowrap; overflow: hidden; }
.coords { display: grid; grid-template-columns: 26px 42px; padding-left: 9px; }
.coords span:nth-child(even) { text-align: right; }
.zl { width: 23px; margin-left: 11px; }
.zoom, .rot { height: 38px; }
.zoom { width: 105px; }
.zoom button, .rot button { width: 21px; }
.zoom input { padding-left: 7px; }
.rl { width: 23px; margin-left: 10px; }
.rot { width: 115px; margin-right: 11px; }
.rot input { padding-left: 12px; }
</style>
